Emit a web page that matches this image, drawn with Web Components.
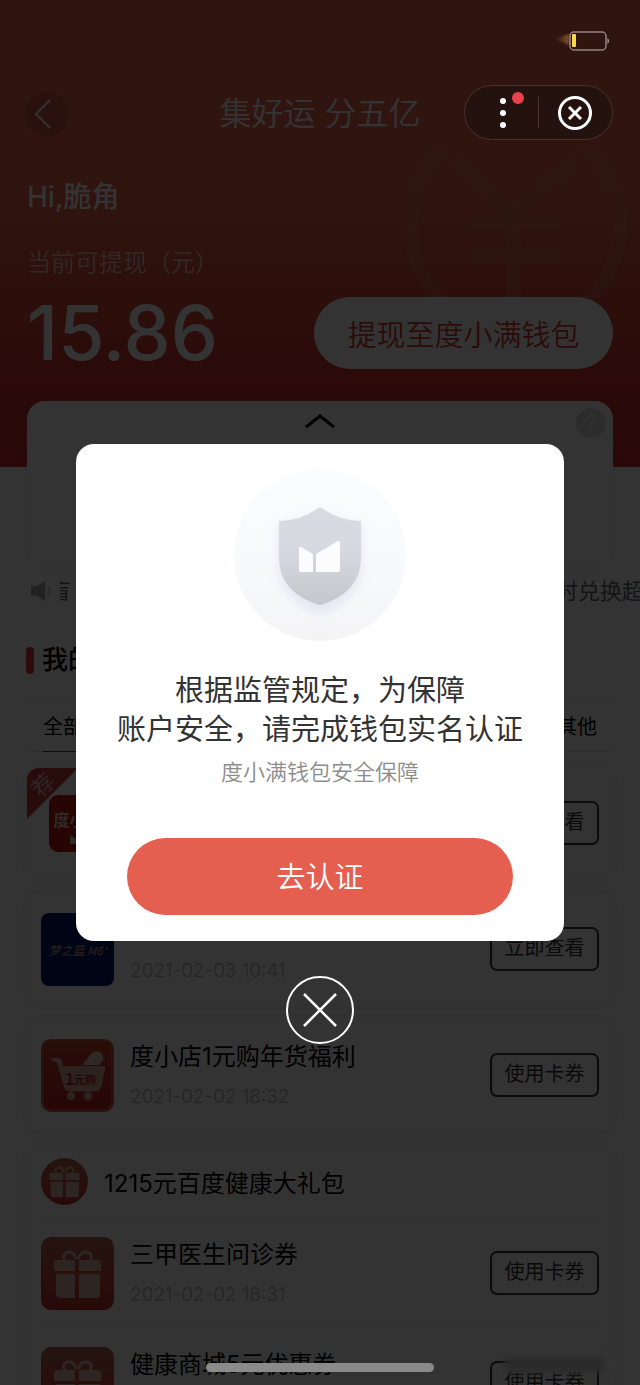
<!DOCTYPE html>
<html lang="zh-CN">
<head>
<meta charset="utf-8">
<meta name="viewport" content="width=device-width, initial-scale=1">
<title>集好运 分五亿</title>
<style>
  html, body { margin: 0; height: 100%; }
  body { font-family: Inter, "Noto Sans CJK SC", sans-serif; color: #000; background: #fff; }
</style>
</head>
<body>
<wallet-app></wallet-app>
<script>
const define = (tag, css, html) => {
  const tpl = document.createElement('template');
  tpl.innerHTML = `<style>*{box-sizing:border-box}button{font:inherit;margin:0;cursor:pointer}${css}</style>${html}`;
  customElements.define(tag, class extends HTMLElement {
    constructor() {
      super();
      this.attachShadow({ mode: 'open' }).append(tpl.content.cloneNode(true));
    }
  });
};

/* Red header: title bar, greeting, balance */
define('wallet-hero', `
  :host { display: block; position: relative; height: 467px; padding: 86px 27px 0; color: #fff;
    background: linear-gradient(#ec6650 0, #ec6650 180px, #e0553f 260px, #d2302f 400px, #d02c2e 100%); }
  .mark { position: absolute; right: 12px; top: 148px; width: 226px; height: 150px; }
  header { display: grid; grid-template-columns: 44px 1fr 44px; align-items: center; height: 55px; margin-left: -2px; margin-right: -2px; }
  .back { width: 44px; height: 44px; padding: 0; border: 0; border-radius: 50%; background: rgba(120,50,35,.28); color: #fff; display: block; }
  h1 { margin: 0; font-size: 32px; line-height: 44px; font-weight: 350; text-align: center; }
  .hi { margin: 34px 0 0; font-size: 28px; line-height: 44px; font-weight: 500; }
  .label { margin: 26px 0 0; font-size: 24px; line-height: 36px; font-weight: 350; opacity: .65; }
  .row { display: flex; justify-content: space-between; align-items: center; height: 72px; margin-top: 16px; position: relative; }
  .sum { font-size: 75px; line-height: 72px; font-weight: 500; }
  .row button { width: 299px; height: 72px; border: 0; border-radius: 36px; background: #fff; color: #d83a30; font-size: 29px; font-weight: 350; padding: 0; }
`, `
  <svg class="mark" viewBox="0 0 226 150" fill="none" stroke="#c2a078" stroke-opacity=".2" stroke-width="14" aria-hidden="true">
    <circle cx="113" cy="77" r="105"/><path d="M54 12l58 54 60-54M112 66v84M70 72h88M70 107h88"/></svg>
  <header>
    <button class="back" aria-label="返回"><svg width="44" height="44" viewBox="0 0 44 44" fill="none" stroke="currentColor" stroke-width="2"><path d="M25 8L11 22l14 14"/></svg></button>
    <h1>集好运 分五亿</h1>
  </header>
  <p class="hi"><slot name="name"></slot></p>
  <p class="label">当前可提现（元）</p>
  <div class="row"><span class="sum"><slot name="amount"></slot></span><button>提现至度小满钱包</button></div>
`);

define('fold-panel', `
  :host { display: block; position: relative; height: 164px; margin: -66px 27px 0; border-radius: 18px; background: #fff; box-shadow: 0 2px 8px rgba(0,0,0,.04); }
  div { display: grid; grid-template-columns: 44px 1fr 44px; padding-top: 7px; justify-items: center; }
  svg { display: block; }
  .up { grid-column: 2; margin-top: 5px; }
  .q { width: 30px; height: 30px; border: 0; padding: 0; border-radius: 50%; background: #dcdcdc; color: #f8f8f8; font-size: 22px; line-height: 30px; }
`, `<div><svg class="up" width="30" height="16" viewBox="0 0 30 16" fill="none" stroke="#000" stroke-width="3"><path d="M1 14L15 3l14 11"/></svg>
  <button class="q" aria-label="帮助">?</button></div>`);

define('news-ticker', `
  :host { display: flex; align-items: center; height: 36px; margin-top: 8px; padding-left: 30px; color: #666; font-size: 22px; line-height: 36px; white-space: nowrap; }
  svg { flex: none; }
  .run { flex: 1; display: flex; justify-content: space-between; overflow: hidden; margin-left: 7px; }
  .run span:first-child { margin-left: -11px; }
  .run span:last-child { margin-right: -4px; }
`, `<svg width="23" height="22" viewBox="0 0 23 22" aria-hidden="true"><path d="M1 6h6l8-5v20l-8-5H1z" fill="#aaa"/><path d="M18 6q4 5 0 10" fill="none" stroke="#ccc" stroke-width="2"/></svg>
  <div class="run"><span>盲</span><span>时兑换超</span></div>`);

define('coupon-tabs', `
  :host { display: block; margin: 33px 27px 0; }
  h2 { display: flex; align-items: center; gap: 8px; height: 36px; margin: 0 0 0 -1px; font-size: 26px; line-height: 36px; font-weight: 500; }
  h2::before { content: ""; width: 8px; height: 27px; border-radius: 4px; background: #dc3f38; }
  nav { display: flex; justify-content: space-between; height: 53px; margin-top: 21px; padding: 0 16px; border: solid #e6e6e6; border-width: 1px 0; font-size: 20px; line-height: 54px; }
  a { color: #000; text-decoration: none; height: 52px; }
  .on { border-bottom: 1px solid #444; }
`, `<h2><slot></slot></h2><nav><a class="on" href="#all">全部</a><a href="#other">其他</a></nav>`);

define('coupon-card', `
  :host { display: block; position: relative; margin: 0 27px 16px; border-radius: 12px; background: #fff; box-shadow: 0 0 12px rgba(0,0,0,.05); overflow: hidden; }
`, `<slot></slot>`);

define('coupon-row', `
  :host { display: flex; align-items: center; height: 110px; padding: 0 14px; }
  ::slotted([slot=icon]) { flex: none; margin-right: 16px; }
  .t { flex: 1; min-width: 0; white-space: nowrap; padding-top: 2px; }
  .name { height: 36px; font-size: 24px; line-height: 36px; }
  .date { height: 32px; margin-top: 6px; font-size: 19px; line-height: 32px; color: #b4b4b4; font-weight: 300; }
  button { flex: none; width: 109px; height: 44px; padding: 0 0 2px; border: 2px solid #383838; border-radius: 7px; background: none; color: #333; font-size: 20px; line-height: 38px; }
`, `<slot name="icon"></slot><div class="t"><div class="name"><slot></slot></div><div class="date"><slot name="date"></slot></div></div><button><slot name="action"></slot></button>`);

define('bundle-title', `
  :host { display: flex; align-items: center; gap: 16px; height: 72px; margin: 0 14px; border-bottom: 1px solid #e8e8e8; font-size: 24px; }
`, `<gift-icon round></gift-icon><span><slot></slot></span>`);

define('gift-icon', `
  :host { display: block; flex: none; width: 73px; height: 73px; border-radius: 10px; background: linear-gradient(#b06650, #c84a38 55%, #c02c30); }
  :host([round]) { width: 47px; height: 47px; border-radius: 50%; }
  svg { display: block; width: 100%; height: 100%; }
`, `<svg viewBox="0 0 73 73" aria-hidden="true"><g fill="none" stroke="#dcb8a8" stroke-width="3"><path d="M35 22q-2-8-8-7-7 2-3 8M37 22q3-8 9-7 7 2 3 8"/></g>
  <path fill="#dcb8a8" d="M13 26q0-3 3-3h18v11H13zM38 23h19q3 0 3 3v8H38zM15 37h19v24H19q-4 0-4-4zM38 37h21v20q0 4-4 4H38z"/></svg>`);

define('cart-icon', `
  :host { display: block; width: 73px; height: 73px; border: 3px solid #c05c40; border-radius: 10px; background: linear-gradient(#c8402c, #c02420); }
  svg { display: block; width: 67px; height: 67px; }
  text { font: 700 11px "Noto Sans CJK SC", sans-serif; fill: #b8281e; }
  .one { font-size: 16px; }
`, `<svg viewBox="0 0 67 67" aria-hidden="true"><path d="M7 17l7 2 7 24q1 5 5 5h26q3 0 4-4l4-19" fill="none" stroke="#dcac94" stroke-width="3" stroke-linejoin="round"/><path d="M7 16h7q3 0 4 3l1 5h41l-5 22q0 2-3 2H26q-4 0-5-5L14 21z" fill="#dcac94"/>
  <path d="M38 23l10-12q6-4 10 1 3 5-1 9l-2 2z" fill="#e0ccc0"/><circle cx="27" cy="54" r="4" fill="#dcac94"/><circle cx="44" cy="54" r="4" fill="#dcac94"/>
  <text class="one" x="21" y="43">1</text><text x="30" y="42">元购</text></svg>`);

define('wine-icon', `
  :host { display: flex; align-items: center; justify-content: center; width: 73px; height: 73px; border-radius: 8px; background: #041468; color: #d8b480; font: italic 12px "Noto Sans CJK SC", sans-serif; white-space: nowrap; }
  small { margin-left: 3px; font-size: 11px; }
`, `<span>梦之蓝<small>M6⁺</small></span>`);

define('promo-icon', `
  :host { display: block; width: 73px; height: 73px; }
  .tag { position: absolute; left: -1px; top: 0; }
  .logo { position: absolute; left: 22px; top: 27px; width: 57px; height: 57px; border-radius: 9px; background: #c41c10; color: #ecd0c8; font-size: 16px; font-weight: 700; text-align: center; line-height: 50px; overflow: hidden; white-space: nowrap; }
  .logo svg { position: absolute; left: 21px; top: 40px; }
  text { font: 350 22px "Noto Sans CJK SC", sans-serif; fill: #e8c8c0; }
`, `<svg class="tag" width="52" height="52" viewBox="0 0 52 52"><path d="M0 10Q0 0 10 0H52L0 52z" fill="#c23c38"/><text x="-11" y="8" transform="translate(17 17) rotate(-45)">荐</text></svg>
  <span class="logo">度小满<svg width="16" height="9" viewBox="0 0 16 9" fill="#ecd0c8"><path d="M0 0l6 4v5H0zM7 4l9-4v9H7z"/></svg></span>`);

/* System controls that stay above the dimmed page */
define('system-bar', `
  :host { display: flex; flex-direction: column; align-items: flex-end; padding: 30px 27px 0; width: 100%; height: 444px; }
  .bat { margin-right: 3px; display: block; }
  .cap { display: flex; align-items: center; width: 149px; height: 55px; margin-top: 34px; border: 1px solid #4c302a; border-radius: 28px; background: #24120f; }
  button { flex: 1; height: 53px; padding: 0; border: 0; background: none; display: flex; align-items: center; justify-content: center; }
  i { width: 1px; height: 31px; background: #48302b; }
`, `<svg class="bat" width="56" height="21" viewBox="0 0 56 21" aria-hidden="true"><defs><linearGradient id="glow"><stop offset="0" stop-color="#7a5634" stop-opacity="0"/><stop offset="1" stop-color="#a8763c" stop-opacity=".7"/></linearGradient><filter id="haze"><feGaussianBlur stdDeviation="1"/></filter></defs>
  <path d="M0 9L15 4v11z" fill="url(#glow)" filter="url(#haze)"/><rect x="16" y="2" width="36" height="18" rx="4" fill="none" stroke="#978282" stroke-width="1.5"/><rect x="18" y="4" width="4" height="13" rx="1" fill="#f8d648"/><path d="M53.500 8q3 3 0 6z" fill="#aaa"/></svg>
  <div class="cap"><button aria-label="更多"><svg width="60" height="53" viewBox="0 0 60 53"><g fill="#fff"><circle cx="31" cy="15" r="3"/><circle cx="31" cy="27" r="3"/><circle cx="31" cy="39" r="3"/></g><circle cx="46" cy="12" r="6" fill="#ea4150"/></svg></button><i></i>
  <button aria-label="关闭小程序"><svg width="36" height="36" viewBox="0 0 36 36" fill="none" stroke="#fff"><circle cx="17" cy="18" r="15.500" stroke-width="3"/><path d="M11 12l12 12M23 12L11 24" stroke-width="3"/></svg></button></div>`);

define('auth-dialog', `
  :host { display: flex; flex-direction: column; align-items: center; width: calc(100% - 152px); height: 497px; padding: 25px 24px 0; border-radius: 18px; background: #fff; }
  .badge { display: block; flex: none; }
  h2 { margin: 30px 0 0; font-size: 29px; line-height: 39px; font-weight: 400; color: #333; text-align: center; white-space: nowrap; }
  p { margin: 6px 0 0; font-size: 22px; line-height: 34px; font-weight: 350; color: #8c8c8c; }
  button { align-self: stretch; height: 77px; margin: 49px 27px 0; padding: 2px 0 0; border: 0; border-radius: 39px; background: #e45f50; color: #fff; font-size: 29px; font-weight: 350; line-height: 75px; }
`, `<svg class="badge" width="172" height="172" viewBox="0 0 172 172" aria-hidden="true"><defs>
  <linearGradient id="disc" x2="0" y2="1"><stop offset="0" stop-color="#fbfcfe"/><stop offset=".6" stop-color="#f8f9fb"/><stop offset="1" stop-color="#f4f4f5"/></linearGradient>
  <linearGradient id="metal" x2="0" y2="1"><stop offset="0" stop-color="#dadbe0"/><stop offset=".4" stop-color="#d7d9e1"/><stop offset="1" stop-color="#c5c7cc"/></linearGradient>
  <filter id="soft" x="-30%" y="-30%" width="160%" height="160%"><feGaussianBlur stdDeviation="6"/></filter></defs>
  <circle cx="86" cy="86" r="86" fill="url(#disc)"/>
  <path d="M86 46l41 12v45q-6 28-41 41-35-13-41-41V58z" fill="#d4d8ec" opacity=".6" filter="url(#soft)"/>
  <path d="M86 38Q105 52 127 52V88Q127 124 86 136Q45 124 45 88V52Q67 52 86 38Z" fill="url(#metal)"/>
  <path d="M65 79q0-2 2-1l12 7v18H67q-2 0-2-2zM82 85l22-13q2-1 2 1v28q0 2-2 2H82z" fill="#fcfcfe"/></svg>
  <h2><slot></slot></h2><p><slot name="note"></slot></p><button><slot name="action"></slot></button>`);

define('modal-layer', `
  :host { position: absolute; inset: 0; display: flex; flex-direction: column; align-items: center; background: rgba(0,0,0,.8); }
  .x { margin-top: 34px; padding: 0; border: 0; background: none; }
  .x svg { display: block; }
  .smudge { position: absolute; right: 36px; bottom: 12px; width: 100px; height: 16px; background: #2b2b2b; filter: blur(3px); }
  .home { position: absolute; bottom: 13px; left: 206px; right: 206px; height: 9px; border-radius: 5px; background: #8a8a8a; }
`, `<slot></slot><button class="x" aria-label="关闭"><svg width="70" height="70" viewBox="0 0 70 70" fill="none" stroke="#fff"><circle cx="35" cy="35" r="33" stroke-width="2"/><path d="M19 19l32 32M51 19L19 51" stroke-width="2.500"/></svg></button>
  <div class="smudge"></div><div class="home"></div>`);

define('wallet-app', `
  :host { display: block; position: relative; height: 100vh; overflow: hidden; background: #fdfdfd; }
  .list { margin-top: 16px; }
  hr { height: 1px; margin: -1px 14px 0; border: 0; background: #e8e8e8; }
`, `
  <wallet-hero><span slot="name">Hi,脆角</span><span slot="amount">15.86</span></wallet-hero>
  <fold-panel></fold-panel>
  <news-ticker></news-ticker>
  <coupon-tabs>我的</coupon-tabs>
  <main class="list">
    <coupon-card><coupon-row><promo-icon slot="icon"></promo-icon><span slot="action">立即查看</span></coupon-row></coupon-card>
    <coupon-card><coupon-row><wine-icon slot="icon"></wine-icon><span slot="date">2021-02-03 10:41</span><span slot="action">立即查看</span></coupon-row></coupon-card>
    <coupon-card><coupon-row><cart-icon slot="icon"></cart-icon>度小店1元购年货福利<span slot="date">2021-02-02 18:32</span><span slot="action">使用卡券</span></coupon-row></coupon-card>
    <coupon-card><bundle-title>1215元百度健康大礼包</bundle-title>
      <coupon-row><gift-icon slot="icon"></gift-icon>三甲医生问诊券<span slot="date">2021-02-02 18:31</span><span slot="action">使用卡券</span></coupon-row><hr>
      <coupon-row><gift-icon slot="icon"></gift-icon>健康商城5元优惠券<span slot="action">使用卡券</span></coupon-row></coupon-card>
  </main>
  <modal-layer>
    <system-bar></system-bar>
    <auth-dialog role="dialog" aria-modal="true">根据监管规定，为保障<br>账户安全，请完成钱包实名认证<span slot="note">度小满钱包安全保障</span><span slot="action">去认证</span></auth-dialog>
  </modal-layer>
`);
</script>
</body>
</html>
